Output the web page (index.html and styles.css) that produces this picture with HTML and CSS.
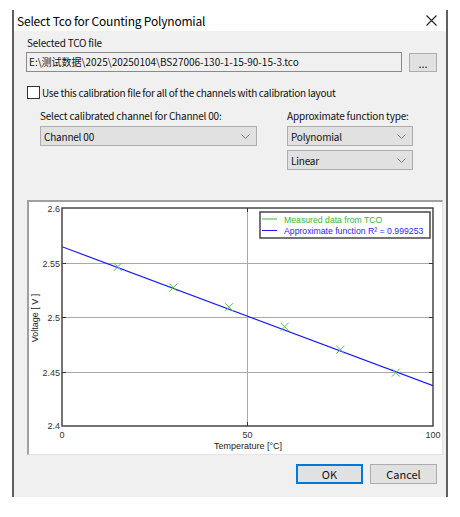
FILE: index.html
```html
<!DOCTYPE html>
<html lang="en">
<head>
    <meta charset="UTF-8">
    <title>Select Tco for Counting Polynomial</title>
    <link rel="stylesheet" href="styles.css">
</head>
<body>
    <div class="dialog">
        <div class="titlebar">
            <span class="title">Select Tco for Counting Polynomial</span>
            <svg class="close" width="11" height="11" viewBox="0 0 11 11">
                <path d="M0.5 0.5 L10.5 10.5 M10.5 0.5 L0.5 10.5" stroke="#222" stroke-width="1.1" fill="none"/>
            </svg>
        </div>
        <div class="body">
            <div class="label first">Selected TCO file</div>
            <div class="file-row">
                <div class="file-field">E:\测试数据\2025\20250104\BS27006-130-1-15-90-15-3.tco</div>
                <button class="btn browse">...</button>
            </div>
            <div class="check-row">
                <span class="checkbox"></span>
                <span class="check-label">Use this calibration file for all of the channels with calibration layout</span>
            </div>
            <div class="options">
                <div class="col left-col">
                    <div class="label">Select calibrated channel for Channel 00:</div>
                    <div class="select">
                        <span>Channel 00</span>
                        <svg width="9" height="5" viewBox="0 0 9 5"><path d="M0.5 0.5 L4.5 4.5 L8.5 0.5" stroke="#777" fill="none"/></svg>
                    </div>
                </div>
                <div class="col right-col">
                    <div class="label">Approximate function type:</div>
                    <div class="select">
                        <span>Polynomial</span>
                        <svg width="9" height="5" viewBox="0 0 9 5"><path d="M0.5 0.5 L4.5 4.5 L8.5 0.5" stroke="#777" fill="none"/></svg>
                    </div>
                    <div class="select">
                        <span>Linear</span>
                        <svg width="9" height="5" viewBox="0 0 9 5"><path d="M0.5 0.5 L4.5 4.5 L8.5 0.5" stroke="#777" fill="none"/></svg>
                    </div>
                </div>
            </div>
            <div class="chart-panel">
                <svg class="chart" width="413" height="252" viewBox="29 202 413 252">
                    <defs>
                        <clipPath id="plot-clip"><rect x="62" y="208" width="371" height="218"/></clipPath>
                    </defs>
                    <!-- grid -->
                    <g stroke="#a8a8a8" stroke-width="1">
                        <line x1="62" y1="263.5" x2="433" y2="263.5"/>
                        <line x1="62" y1="317.5" x2="433" y2="317.5"/>
                        <line x1="62" y1="372.5" x2="433" y2="372.5"/>
                        <line x1="247.5" y1="208" x2="247.5" y2="426"/>
                    </g>
                    <!-- ticks -->
                    <g stroke="#333" stroke-width="1">
                        <line x1="62" y1="263.5" x2="66" y2="263.5"/>
                        <line x1="62" y1="317.5" x2="66" y2="317.5"/>
                        <line x1="62" y1="372.5" x2="66" y2="372.5"/>
                        <line x1="429" y1="263.5" x2="433" y2="263.5"/>
                        <line x1="429" y1="317.5" x2="433" y2="317.5"/>
                        <line x1="429" y1="372.5" x2="433" y2="372.5"/>
                        <line x1="247.5" y1="422" x2="247.5" y2="426"/>
                        <line x1="247.5" y1="208" x2="247.5" y2="212"/>
                    </g>
                    <!-- fitted line and measured points -->
                    <g clip-path="url(#plot-clip)">
                        <line x1="62" y1="246.7" x2="433" y2="385.7" stroke="#1a1aff" stroke-width="1.2"/>
                        <g stroke="#55c055" stroke-width="1" fill="none">
                            <path d="M113.7 262.9 l8 8 M121.7 262.9 l-8 8"/>
                            <path d="M169.3 283.6 l8 8 M177.3 283.6 l-8 8"/>
                            <path d="M225 303.2 l8 8 M233 303.2 l-8 8"/>
                            <path d="M280.6 322.8 l8 8 M288.6 322.8 l-8 8"/>
                            <path d="M336.3 345.7 l8 8 M344.3 345.7 l-8 8"/>
                            <path d="M391.9 368.6 l8 8 M399.9 368.6 l-8 8"/>
                        </g>
                    </g>
                    <rect x="62" y="208" width="371" height="218" fill="none" stroke="#3a3a3a" stroke-width="1.4"/>
                    <!-- legend -->
                    <rect x="260" y="212" width="170" height="26" fill="#fff" stroke="#3a3a3a" stroke-width="1.4"/>
                    <line x1="262" y1="219" x2="277" y2="219" stroke="#3cb43c"/>
                    <line x1="262" y1="230.5" x2="277" y2="230.5" stroke="#1a1aff"/>
                    <text class="legend-green" x="284" y="222.5">Measured data from TCO</text>
                    <text class="legend-blue" x="284" y="234">Approximate function R² = 0.999253</text>
                    <!-- axis labels -->
                    <g class="tick-text" text-anchor="end">
                        <text x="60" y="211.5">2.6</text>
                        <text x="60" y="266.5">2.55</text>
                        <text x="60" y="320.5">2.5</text>
                        <text x="60" y="375.5">2.45</text>
                        <text x="60" y="428.5">2.4</text>
                    </g>
                    <g class="tick-text" text-anchor="middle">
                        <text x="62" y="437.5">0</text>
                        <text x="247.5" y="437.5">50</text>
                        <text x="433" y="437.5">100</text>
                    </g>
                    <text class="axis-title" x="248" y="449" text-anchor="middle">Temperature [°C]</text>
                    <text class="axis-title" x="0" y="0" text-anchor="middle" transform="translate(38 318) rotate(-90)">Voltage [ V ]</text>
                </svg>
            </div>
            <div class="buttons">
                <button class="btn default">OK</button>
                <button class="btn">Cancel</button>
            </div>
        </div>
    </div>
</body>
</html>
```

FILE: styles.css
```css
body {
    margin: 0;
    background: #fff;
    font-family: "Noto Sans CJK SC", "Noto Sans", sans-serif;
    font-size: 10px;
    letter-spacing: -0.2px;
    color: #111;
}
.dialog {
    margin: 10px 0 0 12px;
    width: 436px;
    height: 487px;
    border-left: 2px solid #606060;
    border-right: 2px solid #606060;
    box-sizing: border-box;
    display: flex;
    flex-direction: column;
}
.titlebar {
    height: 21px;
    background: #fff;
    display: flex;
    align-items: center;
    justify-content: space-between;
    padding: 0 9px 0 3px;
}
.title {
    font-size: 12px;
    color: #000;
}
.body {
    flex: 1;
    background: #f0f0f0;
    padding: 0 9px 0 12px;
}
.label {
    line-height: 14px;
    height: 14px;
    white-space: nowrap;
}
.label.first {
    margin-top: 5px;
    padding-left: 1px;
}
.file-row {
    display: flex;
    align-items: center;
    gap: 7px;
    margin-top: 2px;
}
.file-field {
    width: 376px;
    height: 20px;
    box-sizing: border-box;
    border: 1px solid #8a8a8a;
    background: #f0f0f0;
    padding-left: 2px;
    line-height: 18px;
    letter-spacing: 0;
    white-space: nowrap;
    overflow: hidden;
}
.btn {
    font-family: inherit;
    font-size: 11px;
    letter-spacing: 0;
    color: #111;
    background: #e1e1e1;
    border: 1px solid #adadad;
    box-sizing: border-box;
    padding: 0;
    margin: 0;
    width: 67px;
    height: 20px;
}
.btn.browse {
    width: 28px;
    height: 19px;
    margin-top: 1px;
    line-height: 12px;
}
.btn.default {
    border: 1px solid #0078d7;
    box-shadow: inset 0 0 0 1px #0078d7;
}
.check-row {
    display: flex;
    align-items: center;
    margin-top: 14px;
    padding-left: 1px;
    height: 13px;
}
.checkbox {
    width: 13px;
    height: 13px;
    box-sizing: border-box;
    border: 1px solid #333;
    background: #fff;
}
.check-label {
    margin-left: 2px;
    white-space: nowrap;
    letter-spacing: -0.3px;
}
.options {
    display: flex;
    gap: 30px;
    margin-top: 10px;
    padding-left: 14px;
}
.left-col {
    width: 217px;
}
.right-col {
    width: 126px;
}
.select {
    margin-top: 3px;
    height: 20px;
    box-sizing: border-box;
    border: 1px solid #adadad;
    background: #e1e1e1;
    display: flex;
    align-items: center;
    justify-content: space-between;
    padding: 0 6px 0 3px;
}
.select + .select {
    margin-top: 4px;
}
.chart-panel {
    margin: 30px 0 0 1px;
    width: 416px;
    height: 255px;
    box-sizing: border-box;
    background: #fff;
    border-left: 2px solid #a0a0a0;
    border-top: 2px solid #a0a0a0;
    border-right: 1px solid #e3e3e3;
    border-bottom: 1px solid #e3e3e3;
}
.chart {
    display: block;
}
.chart text {
    font-family: "Liberation Sans", Arial, sans-serif;
    font-size: 9px;
    letter-spacing: 0;
}
.chart .legend-green,
.chart .legend-blue {
    font-size: 8.7px;
}
.tick-text {
    fill: #333;
}
.axis-title {
    fill: #222;
}
.legend-green {
    fill: #3cb43c;
}
.legend-blue {
    fill: #2a2aff;
}
.buttons {
    display: flex;
    justify-content: flex-end;
    gap: 7px;
    margin-top: 9px;
}
```
